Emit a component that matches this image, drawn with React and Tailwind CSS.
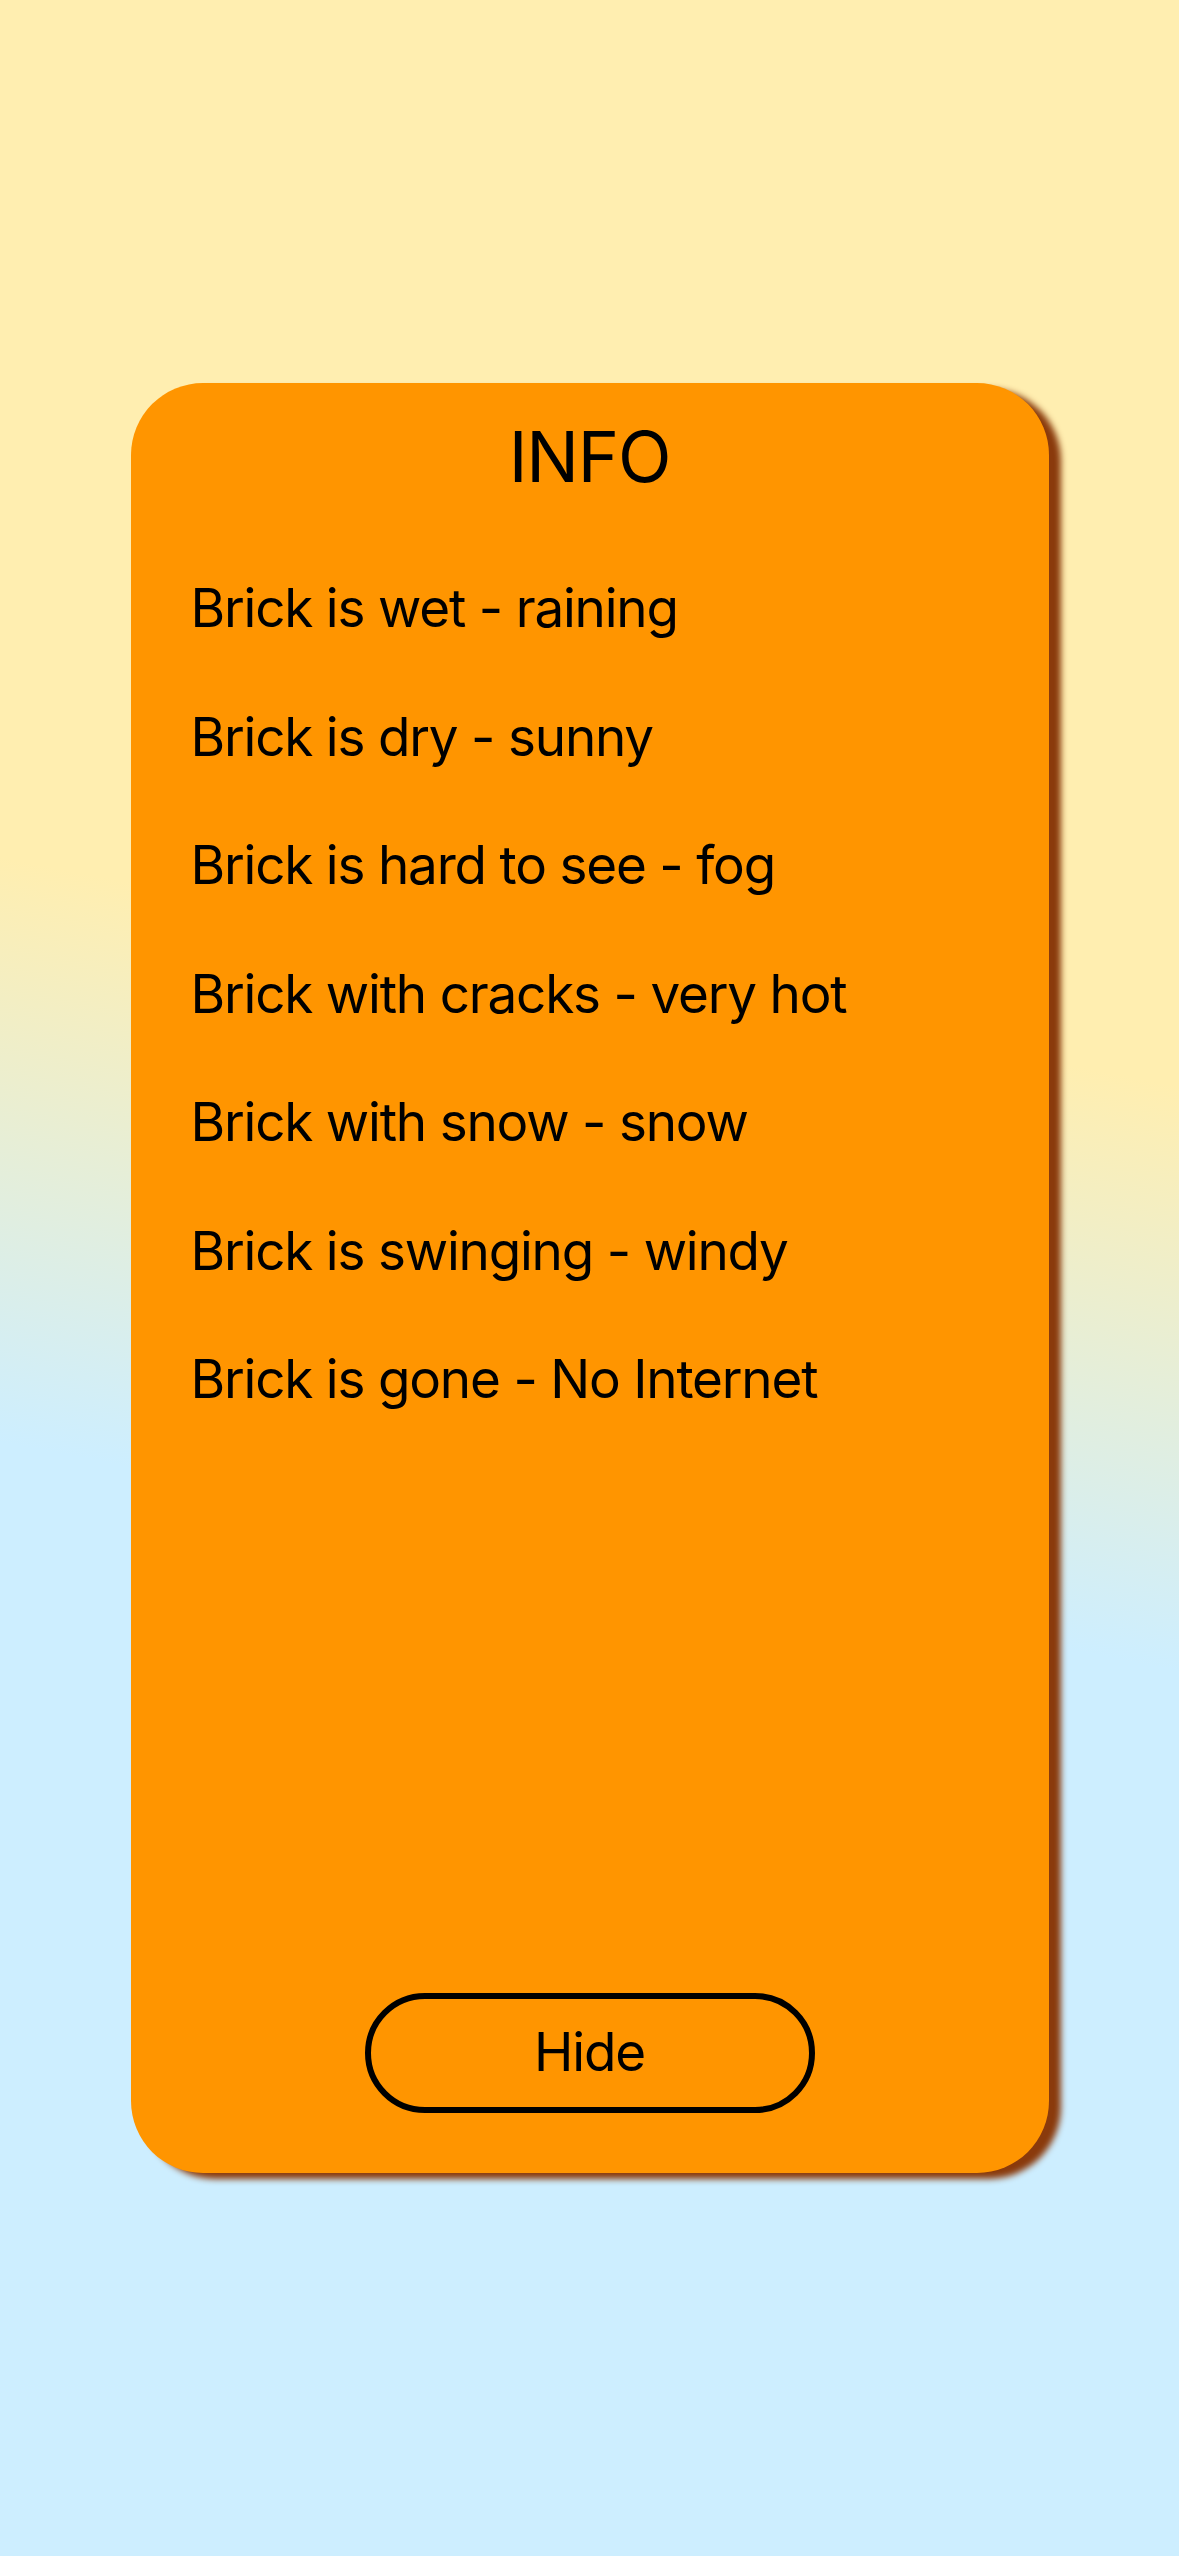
import React from 'react';

const items = [
  'Brick is wet - raining',
  'Brick is dry - sunny',
  'Brick is hard to see - fog',
  'Brick with cracks - very hot',
  'Brick with snow - snow',
  'Brick is swinging - windy',
  'Brick is gone - No Internet',
];

const App = () => {
  return (
    <div className="min-h-[2556px] w-full bg-[linear-gradient(191deg,#FFEEB0_39%,#CDEEFF_60%)] pt-[383px] font-['Inter','Noto_Sans',sans-serif] text-black">
      <div className="mx-auto flex h-[1790px] w-[918px] flex-col rounded-[72px] bg-[#FF9500] pt-[39px] pb-[60px] shadow-[12px_6px_6px_#8a3a0c]">
        <h1 className="text-center text-[70px] leading-[70px] font-normal tracking-[-1.2px]">INFO</h1>

        {/* weather legend */}
        <ul className="mt-[52px] flex flex-col pl-[60px]">
          {items.map((item) => (
            <li key={item} className="text-[53px] leading-[128.5px] tracking-[-1.2px]">
              {item}
            </li>
          ))}
        </ul>

        <button className="mx-auto mt-auto flex h-[120px] w-[450px] items-center justify-center rounded-full border-[6px] border-black text-[53px] tracking-[-1.2px]">
          Hide
        </button>
      </div>
    </div>
  );
};

export default App;
